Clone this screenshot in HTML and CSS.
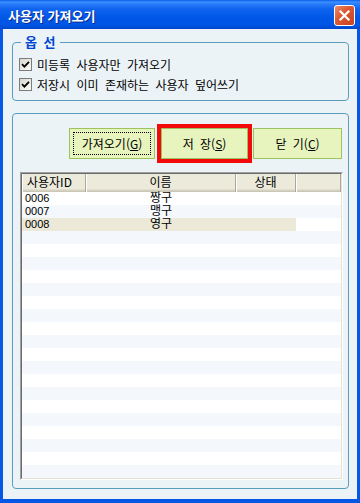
FILE: index.html
```html
<!DOCTYPE html>
<html lang="ko">

<head>
    <meta charset="UTF-8">
    <meta name="viewport" content="width=device-width, initial-scale=1.0">
    <title>사용자 가져오기</title>
    <link rel="stylesheet" href="styles.css">
</head>

<body>
    <div class="window">
        <div class="titlebar">
            <span class="title">사용자 가져오기</span>
            <span class="close">
                <svg width="19" height="19" viewBox="0 0 19 19">
                    <path d="M5.5 5.5 L13.5 13.5 M13.5 5.5 L5.5 13.5" stroke="#fff" stroke-width="2.2" stroke-linecap="square" fill="none"/>
                </svg>
            </span>
        </div>
        <div class="client">
            <fieldset class="group opts">
                <legend>옵 선</legend>
                <label class="chk">
                    <span class="box"><svg width="9" height="9" viewBox="0 0 9 9"><path d="M1 4.2 L3.4 6.6 L8 1.8" stroke="#000" stroke-width="1.8" fill="none"/></svg></span>
                    미등록 사용자만 가져오기
                </label>
                <label class="chk">
                    <span class="box"><svg width="9" height="9" viewBox="0 0 9 9"><path d="M1 4.2 L3.4 6.6 L8 1.8" stroke="#000" stroke-width="1.8" fill="none"/></svg></span>
                    저장시 이미 존재하는 사용자 덮어쓰기
                </label>
            </fieldset>
            <div class="group users">
                <div class="actions">
                    <button class="btn fetch" type="button"><span class="focus">가져오기(<u>G</u>)</span></button>
                    <span class="default"><button class="btn" type="button">저 장(<u>S</u>)</button></span>
                    <button class="btn shut" type="button">닫 기(<u>C</u>)</button>
                </div>
                <div class="listview">
                    <div class="lv-frame">
                        <div class="lv-head">
                            <span class="c1">사용자ID</span>
                            <span class="c2">이름</span>
                            <span class="c3">상태</span>
                            <span class="c4"></span>
                        </div>
                        <div class="lv-body">
                            <div class="row"><span class="c1">0006</span><span class="c2">짱구</span><span class="c3"></span></div>
                            <div class="row"><span class="c1">0007</span><span class="c2">맹구</span><span class="c3"></span></div>
                            <div class="row sel"><span class="c1">0008</span><span class="c2">영구</span><span class="c3"></span></div>
                        </div>
                    </div>
                </div>
            </div>
        </div>
    </div>
</body>

</html>
```

FILE: styles.css
```css
* {
    box-sizing: border-box;
}

body {
    margin: 0;
    font-family: "Noto Sans CJK KR", sans-serif;
    font-size: 12px;
    color: #000;
}

.window {
    width: 360px;
    height: 503px;
    display: flex;
    flex-direction: column;
    background-color: #0054E3;
}

.titlebar {
    flex: none;
    height: 29px;
    display: flex;
    align-items: center;
    justify-content: space-between;
    padding: 2px 5px 0 8px;
    background: linear-gradient(to bottom, #0A5DE8 0, #3D8FFF 2px, #2A7CFA 4px, #0F63EE 9px, #0058E8 18px, #0055E4 25px, #0046CC 29px);
}

.title {
    color: #fff;
    font-weight: bold;
    font-size: 13px;
    line-height: 16px;
    text-shadow: 1px 1px #0B2A8F;
}

.close {
    width: 21px;
    height: 21px;
    display: flex;
    align-items: center;
    justify-content: center;
    border: 1px solid #fff;
    border-radius: 3px;
    background: linear-gradient(135deg, #EE8A66 0, #DD5A36 40%, #C8431F 100%);
}

.client {
    flex: 1;
    display: flex;
    flex-direction: column;
    background-color: #EBF3F7;
    border-style: solid;
    border-color: #0757E6;
    border-width: 0 3px 4px;
}

.group {
    border: 1px solid #5B9DBF;
    border-radius: 4px;
    margin: 0 8px 0 9px;
}

.opts {
    margin-top: 5px;
    padding: 0 0 6px 0;
    min-width: 0;
}

.opts legend {
    margin-left: 8px;
    padding: 0 4px;
    color: #0046D5;
    font-weight: bold;
    font-size: 13px;
    line-height: 16px;
    word-spacing: 3px;
}

.chk {
    display: flex;
    align-items: center;
    gap: 5px;
    height: 20px;
    margin-left: 6px;
    word-spacing: 3px;
}

.chk:first-of-type {
    margin-top: 4px;
}

.box {
    width: 13px;
    height: 13px;
    display: flex;
    align-items: center;
    justify-content: center;
    border: 1px solid #7C7C7C;
    background: linear-gradient(135deg, #D6D6CE 0, #EDEDE8 60%, #FAFAF8 100%);
}

.users {
    flex: 1;
    margin-top: 12px;
    margin-bottom: 10px;
    display: flex;
    flex-direction: column;
    padding: 10px 5px 8px 7px;
}

.actions {
    flex: none;
    height: 39px;
    display: flex;
    justify-content: flex-end;
    align-items: center;
    padding-right: 1px;
}

.btn {
    height: 31px;
    padding: 0;
    font-family: inherit;
    font-size: 12px;
    color: #000;
    background-color: #E7F4BE;
    border: 1px solid #9DC35E;
    cursor: pointer;
}

.fetch {
    width: 86px;
    margin-right: 2px;
    padding: 3px;
}

.focus {
    display: flex;
    height: 100%;
    align-items: center;
    justify-content: center;
    border: 1px dotted #000;
}

.default {
    display: flex;
    border: 4px solid #F20A0A;
    margin-right: 1px;
}

.default .btn {
    width: 87px;
    word-spacing: 3px;
}

.shut {
    width: 89px;
    word-spacing: 3px;
}

.listview {
    flex: 1;
    margin-top: 9px;
    border: 1px solid;
    border-color: #A0A0A0 #FFFFFF #FFFFFF #A0A0A0;
    display: flex;
}

.lv-frame {
    flex: 1;
    display: flex;
    flex-direction: column;
    border: 1px solid;
    border-color: #6B6B6B #E4E1D3 #E4E1D3 #6B6B6B;
    background-color: #fff;
}

.lv-head {
    flex: none;
    height: 18px;
    display: flex;
    background-color: #EBEADB;
    box-shadow: inset 0 -1px #CBC7B8, inset 0 -2px #D6D2C2, inset 0 -3px #E2DECD;
}

.lv-head span {
    line-height: 16px;
    border-right: 1px solid #ACA899;
    box-shadow: inset 1px 0 #fff;
}

.lv-head .c1 {
    padding-left: 5px;
}

.lv-head .c2,
.lv-head .c3 {
    text-align: center;
}

.lv-head .c4 {
    flex: 1;
}

.c1 {
    width: 64px;
}

.c2 {
    width: 150px;
}

.c3 {
    width: 60px;
}

.lv-body {
    flex: 1;
    background: repeating-linear-gradient(to bottom, #fff 0, #fff 13px, #F4F7FC 13px, #F4F7FC 26px);
}

.row {
    display: flex;
    width: 274px;
    height: 13px;
    line-height: 13px;
    font-family: "Liberation Sans", "Noto Sans CJK KR", sans-serif;
    font-size: 11px;
}

.row .c1 {
    padding-left: 3px;
}

.row .c2 {
    text-align: center;
    font-size: 12px;
}

.sel {
    background-color: #ECE9D8;
}
```
